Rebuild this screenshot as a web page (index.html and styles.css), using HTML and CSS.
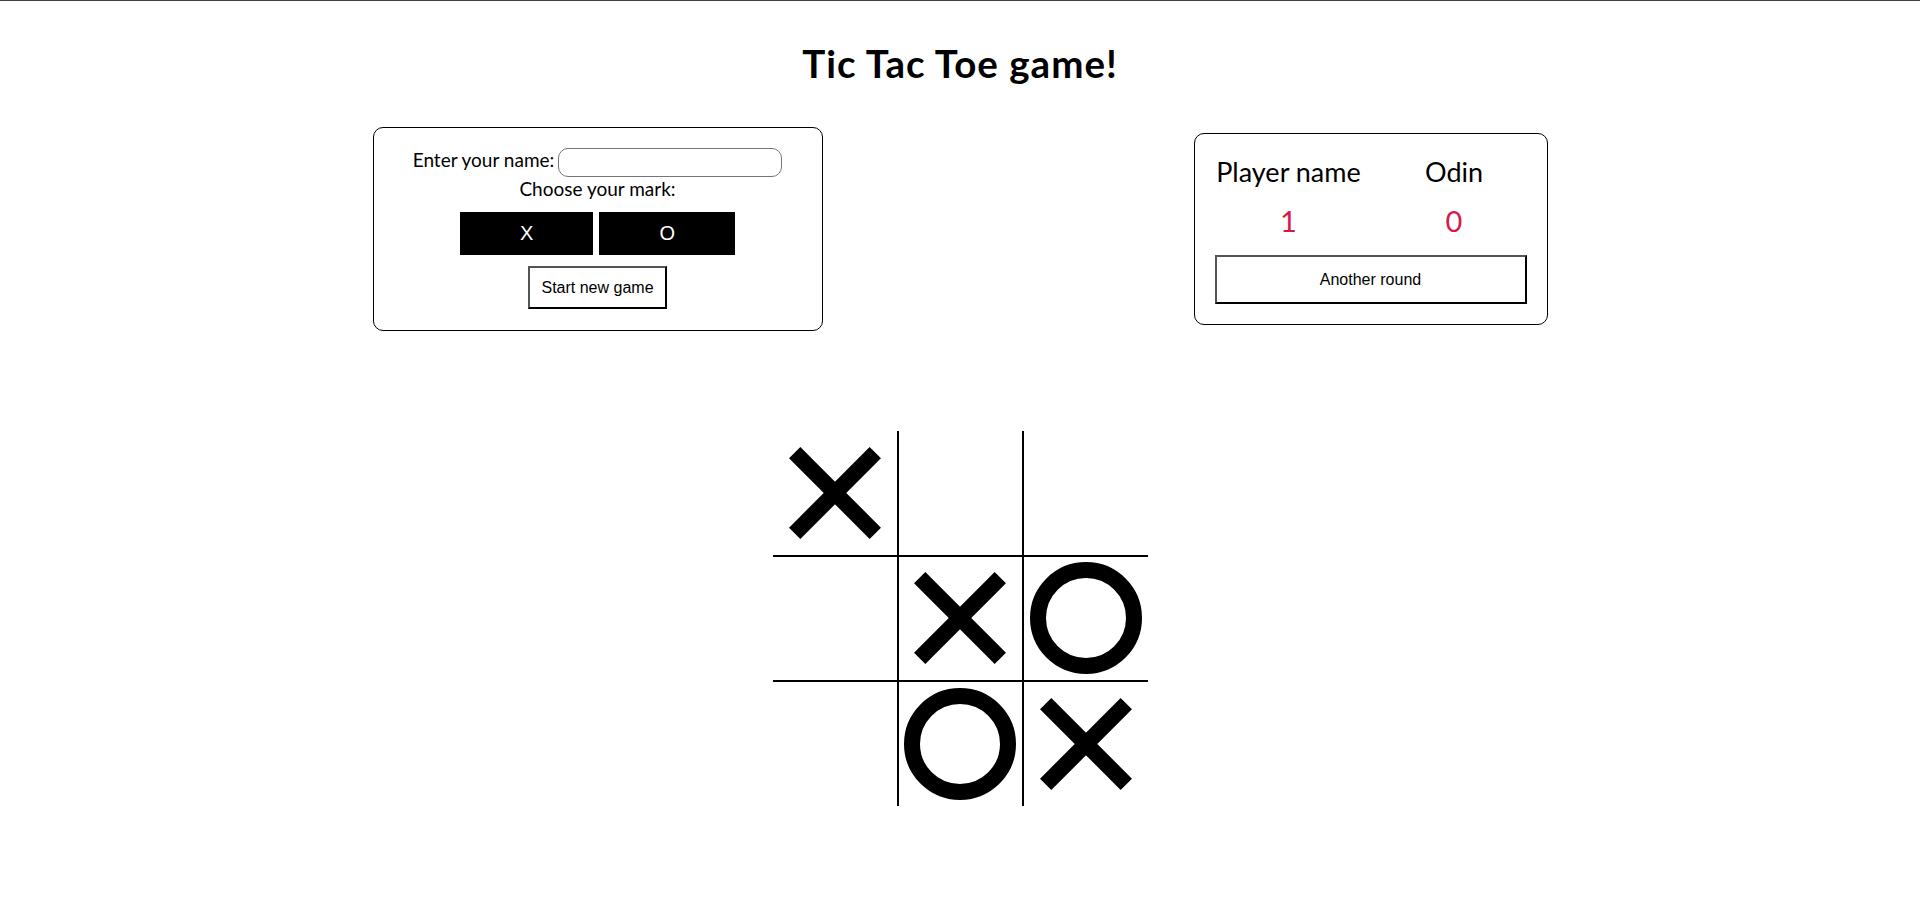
FILE: index.html
```html
<!DOCTYPE html>
<html lang="en">
<head>
<meta charset="utf-8">
<title>Tic Tac Toe</title>
<link rel="stylesheet" href="styles.css">
</head>
<body>
<h1 class="title">Tic Tac Toe game!</h1>
<div class="top">
  <div class="setup">
    <div class="name-row">
      <label class="label" for="pname">Enter your name:</label>
      <input class="name-input" id="pname" type="text">
    </div>
    <div class="label choose">Choose your mark:</div>
    <div class="marks">
      <button class="mark-btn">X</button>
      <button class="mark-btn">O</button>
    </div>
    <button class="plain-btn start-btn">Start new game</button>
  </div>
  <div class="score">
    <div class="score-grid">
      <div class="score-name">Player name</div>
      <div class="score-name col2">Odin</div>
      <div class="score-num">1</div>
      <div class="score-num col2">0</div>
    </div>
    <button class="plain-btn round-btn">Another round</button>
  </div>
</div>
<div class="board">
  <div class="cell r1 c1 x" aria-label="X"></div>
  <div class="cell r1 c2"></div>
  <div class="cell r1 c3"></div>
  <div class="cell r2 c1"></div>
  <div class="cell r2 c2 x" aria-label="X"></div>
  <div class="cell r2 c3 o" aria-label="O"></div>
  <div class="cell r3 c1"></div>
  <div class="cell r3 c2 o" aria-label="O"></div>
  <div class="cell r3 c3 x" aria-label="X"></div>
</div>
</body>
</html>
```
FILE: styles.css
```css
html, body {
  margin: 0;
  padding: 0;
  background: #fff;
}
body {
  border-top: 1px solid #4b3d44;
  font-family: Lato, "Open Sans", sans-serif;
  color: #000;
}
.title {
  margin: 39px 0 0;
  text-align: center;
  font-size: 38.5px;
  font-weight: 700;
  line-height: 1.2;
  letter-spacing: 1px;
}
.top {
  width: 1546px;
  margin: 41px auto 0;
  display: flex;
  justify-content: space-around;
  align-items: center;
}
.setup {
  width: 450px;
  box-sizing: border-box;
  border: 1px solid #000;
  border-radius: 10px;
  padding: 20px 0 21px;
  display: flex;
  flex-direction: column;
  align-items: center;
}
.name-row {
  display: flex;
  align-items: flex-start;
  gap: 4px;
  height: 29px;
}
.label {
  font-size: 19px;
  line-height: 1.2;
}
.name-row .label {
  margin-top: 1px;
}
.name-input {
  width: 224px;
  height: 29px;
  box-sizing: border-box;
  border: 1px solid #767676;
  border-radius: 10px;
  padding: 0 8px;
  margin: 0;
  font: inherit;
}
.choose {
  margin-top: 1px;
}
.marks {
  display: flex;
  gap: 6px;
  margin-top: 11px;
}
.mark-btn {
  background: #000;
  color: #fff;
  border: 0;
  margin: 0;
  height: 43px;
  padding: 0 60px;
  font-family: "Liberation Sans", Arial, sans-serif;
  font-size: 20px;
}
.plain-btn {
  background: #fff;
  color: #000;
  border: 2px solid;
  border-color: #555 #000 #000 #555;
  margin: 0;
  font-family: "Liberation Sans", Arial, sans-serif;
  font-size: 16px;
  line-height: 19px;
}
.start-btn {
  margin-top: 11px;
  height: 43px;
  padding: 0 11px;
}
.score {
  width: 354px;
  box-sizing: border-box;
  border: 1px solid #000;
  border-radius: 10px;
  padding: 22px 20px 20px;
}
.score-grid {
  display: grid;
  grid-template-columns: 148px 1fr;
  row-gap: 16px;
  text-align: center;
}
.col2 {
  padding-left: 19px;
}
.score-name {
  font-size: 27px;
  line-height: 1.2;
}
.score-num {
  font-size: 29px;
  line-height: 1.2;
  color: #d7194a;
}
.round-btn {
  display: block;
  width: 100%;
  height: 49px;
  margin-top: 16px;
  padding: 0;
}
.board {
  width: 375px;
  margin: 100px auto 0;
  display: grid;
  grid-template-columns: repeat(3, 125px);
  grid-template-rows: repeat(3, 125px);
}
.cell {
  box-sizing: border-box;
  display: grid;
  place-items: center;
  border: 0 solid #000;
}
.c1 { border-right-width: 1px; }
.c2 { border-left-width: 1px; border-right-width: 1px; }
.c3 { border-left-width: 1px; }
.r1 { border-bottom-width: 1px; }
.r2 { border-top-width: 1px; border-bottom-width: 1px; }
.r3 { border-top-width: 1px; }
.x::before,
.x::after {
  content: "";
  grid-area: 1 / 1;
  width: 114px;
  height: 16px;
  background: #000;
}
.x::before { transform: rotate(45deg); }
.x::after { transform: rotate(-45deg); }
.o::before {
  content: "";
  width: 112px;
  height: 112px;
  box-sizing: border-box;
  border: 16px solid #000;
  border-radius: 50%;
}
```
